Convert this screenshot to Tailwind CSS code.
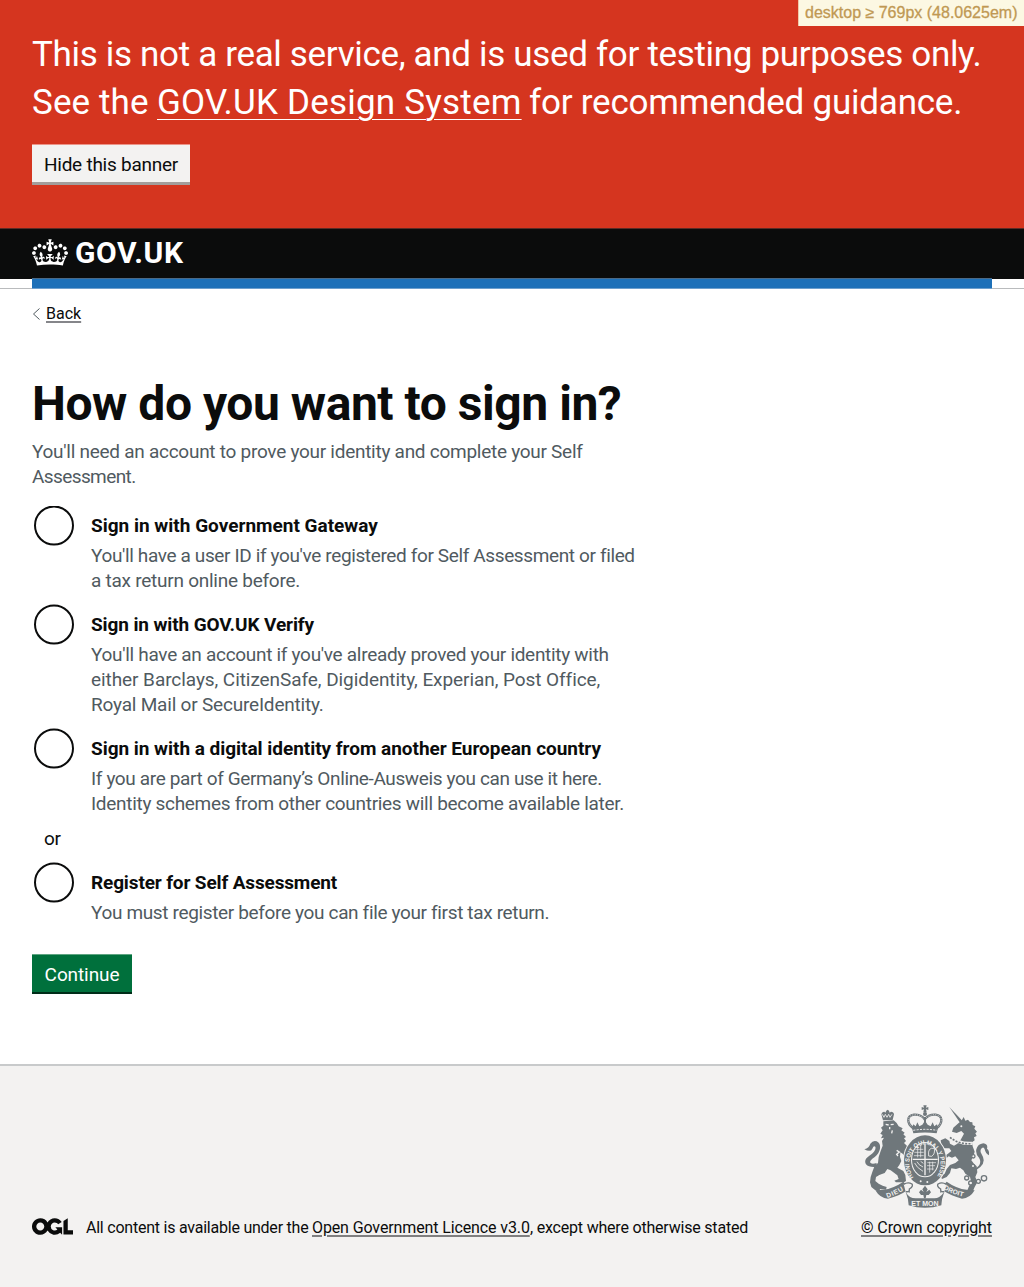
<!DOCTYPE html>
<html lang="en">
<head>
<meta charset="utf-8">
<title>How do you want to sign in? - GOV.UK</title>
<script src="https://cdn.jsdelivr.net/npm/@tailwindcss/browser@4"></script>
</head>
<body class="relative bg-white font-['Roboto',sans-serif] text-[19px] leading-[25px] text-[#0b0c0c] whitespace-nowrap">

<div class="absolute top-0 right-0 h-[26px] w-[226px] border-l border-[#f0c9a8] bg-[#fcf8e3] pl-[6px] font-['Liberation_Sans',sans-serif] text-[16px] leading-[25px] text-[#c09853] [-webkit-text-stroke:0.3px_#c09853]">desktop ≥ 769px (48.0625em)</div>

<div class="h-[228px] bg-[#d5351f] px-8 pt-[31px] text-[35px] leading-[48px] text-white">
  <p class="tracking-[-0.33px]">This is not a real service, and is used for testing purposes only.</p>
  <p class="flex"><span class="w-[125px] tracking-[0.1px]">See the</span><a class="h-[42px] w-[365px] tracking-[0.21px] underline decoration-1 underline-offset-[5px]">GOV.UK Design System</a><span class="ml-[7px] tracking-[-0.22px]">for recommended guidance.</span></p>
  <button class="mt-[17px] block h-[41px] w-[158px] border-t border-t-[#ec9488] border-b-3 border-b-[#a39d9b] bg-[#f3f2f1] pt-px text-[19px] leading-[37px] tracking-[-0.25px] text-[#0b0c0c]">Hide this banner</button>
</div>

<header class="h-[51px] border-t border-[#5a2b25] bg-[#0b0c0c] px-8">
  <div class="flex h-[49px] items-center text-white">
    <svg class="mt-[-2px] h-[27px] w-[36px]" viewBox="0 0 132 97" fill="currentColor"><path fill-rule="evenodd" d="M25 30.2c3.5 1.5 7.7-.2 9.1-3.7 1.5-3.6-.2-7.8-3.9-9.2-3.6-1.4-7.6.3-9.1 3.9-1.4 3.5.3 7.5 3.9 9zM9 39.5c3.6 1.5 7.8-.2 9.2-3.7 1.5-3.6-.2-7.8-3.9-9.1-3.6-1.5-7.6.2-9.1 3.8-1.4 3.5.3 7.5 3.8 9zM4.4 57.2c3.5 1.5 7.7-.2 9.1-3.8 1.5-3.6-.2-7.7-3.9-9.1-3.5-1.5-7.6.3-9.1 3.8-1.4 3.5.3 7.6 3.9 9.1zm38.3-21.4c3.5 1.5 7.7-.2 9.1-3.8 1.5-3.6-.2-7.7-3.9-9.1-3.6-1.5-7.6.3-9.1 3.8-1.3 3.6.4 7.7 3.9 9.1zm64.4-5.6c-3.6 1.5-7.8-.2-9.1-3.7-1.5-3.6.2-7.8 3.8-9.2 3.6-1.4 7.7.3 9.2 3.9 1.3 3.5-.4 7.5-3.9 9zm15.9 9.3c-3.6 1.5-7.7-.2-9.1-3.7-1.5-3.6.2-7.8 3.7-9.1 3.6-1.5 7.7.2 9.2 3.8 1.5 3.5-.3 7.5-3.8 9zm4.7 17.7c-3.6 1.5-7.8-.2-9.2-3.8-1.5-3.6.2-7.7 3.9-9.1 3.6-1.5 7.7.3 9.2 3.8 1.3 3.5-.4 7.6-3.9 9.1zM89.3 35.8c-3.6 1.5-7.8-.2-9.2-3.8-1.4-3.6.2-7.7 3.9-9.1 3.6-1.5 7.7.3 9.2 3.8 1.4 3.6-.3 7.7-3.9 9.1zM69.7 17.7l8.9 4.7V9.3l-8.9 2.8c-.2-.3-.5-.6-.9-.9L72.4 0H59.6l3.5 11.2c-.3.3-.6.5-.9.9l-8.8-2.8v13.1l8.8-4.7c.3.3.6.7.9.9l-5 15.4v.1c-.2.8-.4 1.6-.4 2.4 0 4.1 3.1 7.5 7 8.1h.2c.3 0 .7.1 1 .1.4 0 .7 0 1-.1h.2c4-.6 7.1-4.1 7.1-8.1 0-.8-.1-1.7-.4-2.4V34l-5.1-15.4c.4-.2.7-.6 1-.9zM66 92.8c16.9 0 32.8 1.1 47.1 3.2 4-16.9 8.9-26.7 14-33.5l-9.6-3.4c1 4.9 1.1 7.2 0 10.2-1.5-1.4-3-4.3-4.2-8.7L108.6 76c2.8-2 5-3.2 7.5-3.3-4.4 9.4-10 11.9-13.6 11.2-4.3-.8-6.3-4.6-5.6-7.9 1-4.7 5.7-5.9 8-.5 4.3-8.7-3-11.4-7.6-8.8 7.1-7.2 7.9-13.5 2.1-21.1-8 6.1-8.1 12.3-4.5 20.8-4.7-5.4-12.1-2.5-9.5 6.2 3.4-5.2 7.9-2 7.2 3.1-.6 4.3-6.4 7.8-13.5 7.2-10.3-.9-10.9-8-11.2-13.8 2.5-.5 7.1 1.8 11 7.3L80.2 60c-4.1 4.4-8 5.3-12.3 5.4 1.4-4.4 8-11.6 8-11.6H55.5s6.4 7.2 7.9 11.6c-4.2-.1-8-1-12.3-5.4l1.4 16.4c3.9-5.5 8.5-7.7 10.9-7.3-.3 5.8-.9 12.8-11.1 13.8-7.2.6-12.9-2.9-13.5-7.2-.7-5 3.8-8.3 7.1-3.1 2.7-8.7-4.6-11.6-9.4-6.2 3.7-8.5 3.6-14.7-4.6-20.8-5.8 7.6-5 13.9 2.2 21.1-4.7-2.6-11.9.1-7.7 8.8 2.3-5.5 7.1-4.2 8.1.5.7 3.3-1.3 7.1-5.7 7.9-3.5.7-9-1.8-13.5-11.2 2.5.1 4.7 1.3 7.5 3.3l-4.7-15.4c-1.2 4.4-2.7 7.2-4.3 8.7-1.1-3-.9-5.3 0-10.2l-9.5 3.4c5 6.9 9.9 16.7 14 33.5 14.8-2.1 30.8-3.2 47.7-3.2z"/></svg>
    <span class="mt-[-2px] ml-[7px] text-[30px] leading-[30px] font-bold tracking-[0.65px]">GOV.UK</span>
  </div>
  <div class="h-[11px] border-t border-[#4a6a88] bg-[#1d70b8]"></div>
</header>
<div class="h-[10px] border-b border-[#b9bbbd] px-8"><div class="h-[10px] border-b border-[#6d9fcd] bg-[#1d70b8]"></div></div>

<main class="px-8">
  <a class="mt-[15px] flex h-[20px] items-center text-[16px] leading-[20px]"><svg class="mr-[5px] h-[12px] w-[9px]" viewBox="0 0 9 12" fill="none" stroke="#505a5f" stroke-width="1"><path d="M7.500 .5 1.500 6l6 5.500"/></svg><span class="underline decoration-[#85868a] decoration-2 underline-offset-[2px]">Back</span></a>

  <h1 class="mt-[55px] text-[48px] leading-[50px] font-bold tracking-[-0.46px]">How do you want to sign in?</h1>
  <div class="mt-[10px] text-[#505a5f]">
    <p class="tracking-[-0.27px]">You'll need an account to prove your identity and complete your Self</p>
    <p class="tracking-[-0.6px]">Assessment.</p>
  </div>

  <div class="mt-[16.5px] flex h-[99px] gap-[17px] pl-[2px]">
    <svg class="size-[40px] shrink-0" fill="none" stroke="#0b0c0c" stroke-width="2"><circle cx="20" cy="19.500" r="19"/></svg>
    <div class="pt-[7.5px] text-[#505a5f]">
      <p class="mb-[5px] font-bold text-[#0b0c0c]">Sign in with Government Gateway</p>
      <p class="tracking-[-0.37px]">You'll have a user ID if you've registered for Self Assessment or filed</p>
      <p class="tracking-[-0.25px]">a tax return online before.</p>
    </div>
  </div>
  <div class="flex h-[124px] gap-[17px] pl-[2px]">
    <svg class="size-[40px] shrink-0 overflow-visible" fill="none" stroke="#0b0c0c" stroke-width="2"><circle cx="20" cy="19.500" r="19"/></svg>
    <div class="pt-[7.5px] text-[#505a5f]">
      <p class="mb-[5px] font-bold tracking-[-0.11px] text-[#0b0c0c]">Sign in with GOV.UK Verify</p>
      <p class="tracking-[-0.3px]">You'll have an account if you've already proved your identity with</p>
      <p class="tracking-[-0.07px]">either Barclays, CitizenSafe, Digidentity, Experian, Post Office,</p>
      <p class="tracking-[-0.2px]">Royal Mail or SecureIdentity.</p>
    </div>
  </div>
  <div class="flex h-[99px] gap-[17px] pl-[2px]">
    <svg class="size-[40px] shrink-0 overflow-visible" fill="none" stroke="#0b0c0c" stroke-width="2"><circle cx="20" cy="19.500" r="19"/></svg>
    <div class="pt-[7.5px] text-[#505a5f]">
      <p class="mb-[5px] font-bold tracking-[-0.03px] text-[#0b0c0c]">Sign in with a digital identity from another European country</p>
      <p class="tracking-[-0.37px]">If you are part of Germany’s Online-Ausweis you can use it here.</p>
      <p class="tracking-[-0.3px]">Identity schemes from other countries will become available later.</p>
    </div>
  </div>
  <p class="mt-[-1.5px] h-[36.5px] pl-[12px] tracking-[-0.3px]">or</p>
  <div class="flex h-[91.5px] gap-[17px] pl-[2px]">
    <svg class="size-[40px] shrink-0 overflow-visible" fill="none" stroke="#0b0c0c" stroke-width="2"><circle cx="20" cy="19.500" r="19"/></svg>
    <div class="pt-[7.5px] text-[#505a5f]">
      <p class="mb-[5px] font-bold tracking-[-0.14px] text-[#0b0c0c]">Register for Self Assessment</p>
      <p class="tracking-[-0.35px]">You must register before you can file your first tax return.</p>
    </div>
  </div>
  <button class="block h-[40px] w-[100px] border-t border-b-2 border-t-[#5fa582] border-b-[#002d18] bg-[#00703c] pt-[2px] leading-[35px] tracking-[-0.1px] text-white">Continue</button>
</main>

<footer class="mt-[70px] flex h-[223px] items-start justify-between border-t-2 border-[#c8cacb] bg-[#f3f2f1] px-8 text-[16px] leading-[20px]">
  <div class="mt-[152px] flex">
    <svg class="mr-[13px] h-[17px] w-[41px]" viewBox="0 0 483.2 195.7" fill="currentColor"><path d="M421.5 142.8V.1l-50.7 32.3v161.1h112.4v-50.7zm-122.3-9.6A47.12 47.12 0 0 1 221 97.8c0-26 21.1-47.1 47.1-47.1 16.7 0 31.4 8.7 39.7 21.8l42.7-27.2A97.63 97.63 0 0 0 268.1 0c-36.5 0-68.3 20.1-85.1 49.7A98 98 0 0 0 97.8 0C43.9 0 0 43.9 0 97.8s43.9 97.8 97.8 97.8c36.5 0 68.3-20.1 85.1-49.7a97.76 97.76 0 0 0 149.6 25.4l19.4 22.2h3v-87.8h-80l24.3 27.5zM97.8 145c-26 0-47.1-21.1-47.1-47.1s21.1-47.1 47.1-47.1 47.1 21.1 47.1 47.1S123.8 145 97.8 145"/></svg>
    <span class="w-[226px] tracking-[-0.23px]">All content is available under the</span><a class="w-[218px] tracking-[-0.12px] underline decoration-[#7f7f80] decoration-2 underline-offset-[2px]">Open Government Licence v3.0</a><span class="tracking-[-0.2px]">, except where otherwise stated</span>
  </div>
  <a class="mt-[39px] flex w-[131px] flex-col items-center">
    <svg class="h-[103px] w-[125px]" viewBox="42 30 375 309" fill="#6f777b">
      <!-- lion -->
      <path d="M94 58q2-9 9-8l3 3 3-6 4-3 4 3 2 6 4-3q8 0 9 8l-4 17-29 1z"/>
      <path d="M97 58l5 9 4-9 5 9 5-9 4 9 6-9" fill="none" stroke="#f3f2f1" stroke-width="2.500"/>
      <path d="M100 79 131 76 140 84 146 94 158 100 154 106 164 113 160 118 168 126 162 130 168 138 162 144 172 154 180 160 173 166 182 174 172 177 174 186 164 184 158 176 151 172 150 186 154 198 148 210 142 218 160 228 166 240 168 258 162 262 138 262 133 257 146 252 142 241 122 226 112 222 104 234 88 240 78 246 76 258 86 266 98 272 110 276 108 284 90 282 88 290 74 284 64 276 60 262 62 246 68 228 74 212 84 204 86 186 92 168 98 152 96 138 102 128 93 130 98 120 91 116 98 106 93 98 100 92z"/>
      <path d="M78 216q-22 2-30-8-8-14 10-26 22-14 18-27-5-4-9 6-5 12-24 2 15-5 18-17 8-11 19-7 14 7 9 26-5 16-22 26-10 8-5 13 5 4 18 0z"/>
      <path d="M107 88l9 2m6-1 9-1M119 96v7m8 3-2 9" fill="none" stroke="#f3f2f1" stroke-width="4"/>
      <path d="M140 166l8 5-8 7 4 5" stroke="#f3f2f1" stroke-width="4" fill="none"/>
      <!-- unicorn -->
      <path d="M298 36l43 46-9 4z"/>
      <path d="M306 110 310 98 326 84 334 78 341 66 346 77 354 74 360 81 367 82 368 90 376 94 373 101 381 110 376 115 380 123 372 127 374 136 366 142 368 154 374 170 370 184 364 196 372 206 380 214 382 232 376 246 382 262 374 276 368 290 350 292 356 276 364 262 360 246 346 236 340 226 330 218 318 222 304 220 300 234 290 246 276 252 272 244 284 236 290 222 300 210 316 204 326 196 316 184 306 188 296 184 286 192 282 184 294 176 304 168 298 160 284 160 274 148 272 136 286 130 298 138 300 146 312 152 322 146 330 138 342 116 334 108 320 114z"/>
      <path d="M301 126q27 22 66 19" fill="none" stroke="#f3f2f1" stroke-width="10"/>
      <path d="M300 127q27 22 66 19" fill="none" stroke="#6f777b" stroke-width="5" stroke-dasharray="6 4"/>
      <circle cx="334" cy="94" r="3" fill="#f3f2f1"/>
      <path d="M373 222q26-14 14-34-11-12-8-25 4-16 21-18 15 2 11 16 7 5 7 20-11-4-14-18-3-9-9-3-7 7 0 18 14 22-4 38l-16 12z"/>
      <g fill="#f3f2f1" stroke="#6f777b" stroke-width="4"><circle cx="350" cy="249" r="6"/><circle cx="362" cy="264" r="6"/><circle cx="385" cy="259" r="6"/><circle cx="402" cy="250" r="8"/><circle cx="370" cy="184" r="5"/><circle cx="369" cy="213" r="5"/></g>
      <!-- crown -->
      <path d="M220 31h10l-2 7 7-2v9l-7-2 2 9h-10l2-9-7 2v-9l7 2z"/>
      <circle cx="225" cy="57" r="6"/>
      <path d="M189 99c-20-16-19-37 3-40 14-1 27 6 32 14 6-8 19-15 33-14 22 3 22 24 4 40z" fill="none" stroke="#6f777b" stroke-width="7"/>
      <path d="M189 99c-20-16-19-37 3-40 14-1 27 6 32 14 6-8 19-15 33-14 22 3 22 24 4 40z" fill="none" stroke="#f3f2f1" stroke-width="2" stroke-dasharray="3 4"/>
      <path d="M222 66h6v24h-6zM186 99l4-11 7 6 5-12 6 12 9-5 8-12 8 12 9 5 6-12 5 12 8-6 3 11-4 16q-35-5-70 0z"/>
      <path d="M190 106q35-6 71 0" fill="none" stroke="#f3f2f1" stroke-width="3" stroke-dasharray="6 4"/>
      <!-- garter and shield -->
      <ellipse cx="225" cy="196" rx="66" ry="77" fill="#f3f2f1"/>
      <ellipse cx="225" cy="196" rx="63" ry="75"/>
      <ellipse cx="225" cy="194" rx="42" ry="53" fill="#f3f2f1"/>
      <ellipse cx="225" cy="194" rx="39" ry="50"/>
      <path d="M225 145v96M188 193h75" stroke="#f3f2f1" stroke-width="4"/>
      <path d="M196 163h24M193 172h28M192 182h29M203 153v34M212 149v38M232 203h26M231 212h24M231 222h20M239 200v33M248 200v26" stroke="#f3f2f1" stroke-width="2"/>
      <path d="M236 183q-4-27 17-23 3 17-8 24zM194 204q5 13 25 25M201 200q4 10 18 16M212 199l8 6" fill="none" stroke="#f3f2f1" stroke-width="2.500"/>
      <path id="garter" d="M191 247A47 58 0 1 1 259 247" fill="none"/>
      <text font-family="Liberation Sans, sans-serif" font-weight="700" font-size="19" fill="#f3f2f1"><textPath href="#garter" textLength="246" lengthAdjust="spacingAndGlyphs">HONI SOIT QUI MAL Y PENSE</textPath></text>
      <g fill="#f3f2f1"><circle cx="212" cy="259" r="3"/><circle cx="232" cy="261" r="3"/></g>
      <!-- motto ribbon -->
      <path d="M76 286q14 24 38 25 36-9 53-22l13 4-3-14-17-19q-31 21-60 24zM374 286q-14 24-38 25-34-9-53-22l-13 4 3-14 17-19q30 21 60 24z"/>
      <path d="M161 268q13-8 25-1 5 7-8 15 2 10-11 8M289 268q-13-8-25-1-5 7 8 15-2 10 11 8" fill="#f3f2f1" stroke="#6f777b" stroke-width="4"/>
      <path d="M167 290q8 20 9 41 49 15 98 0 1-21 9-41-14 20-30 20h-56q-20 0-30-20z"/>
      <path d="M225 272l8 11-4 8 9-7 5 8-7 8h-7l-2 10h-5l-2-10h-7l-6-8 6-8 8 7-4-8z"/>
      <path id="dieu" d="M112 309Q144 298 170 279" fill="none"/><path id="droit" d="M280 281Q308 299 345 306" fill="none"/>
      <g font-family="Liberation Sans, sans-serif" font-weight="700" font-size="20" fill="#f3f2f1">
        <text><textPath href="#dieu" textLength="54">DIEU</textPath></text>
        <text><textPath href="#droit" textLength="64">DROIT</textPath></text>
        <text x="184" y="332" font-size="21" textLength="82" lengthAdjust="spacingAndGlyphs">ET MON</text>
      </g>
    </svg>
    <span class="mt-[10px] w-[131px] tracking-[-0.09px] underline decoration-[#7f7f80] decoration-2 underline-offset-[2px]">© Crown copyright</span>
  </a>
</footer>
</body>
</html>
